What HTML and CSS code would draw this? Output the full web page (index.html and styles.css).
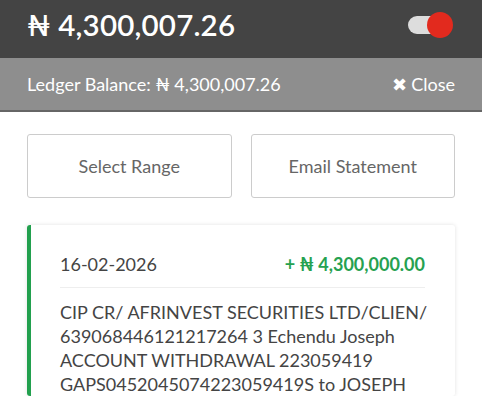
FILE: index.html
```html
<!DOCTYPE html>
<html lang="en">
<head>
  <meta charset="UTF-8" />
  <meta name="viewport" content="width=device-width, initial-scale=1.0" />
  <title>Statement</title>
  <link rel="stylesheet" href="styles.css">
</head>
<body>

  <div class="top">
    <div class="balance">₦ 4,300,007.26</div>
    <div class="toggle"><span class="knob"></span></div>
  </div>

  <div class="ledger">
    <div>Ledger Balance: ₦ 4,300,007.26</div>
    <div class="close">✖ Close</div>
  </div>

  <div class="actions">
    <button class="btn">Select Range</button>
    <button class="btn">Email Statement</button>
  </div>

  <div class="card">
    <div class="card-head">
      <span class="date">16-02-2026</span>
      <span class="credit">+ ₦ 4,300,000.00</span>
    </div>
    <div class="desc">
      CIP CR/ AFRINVEST SECURITIES LTD/CLIEN/<br>
      639068446121217264 3 Echendu Joseph<br>
      ACCOUNT WITHDRAWAL 223059419<br>
      GAPS0452045074223059419S to JOSEPH
    </div>
  </div>

</body>
</html>
```

FILE: styles.css
```css
html, body {
  margin: 0;
  padding: 0;
  background: #fff;
  font-family: Lato, "Open Sans", sans-serif;
  overflow: hidden;
}
.top {
  height: 58px;
  background: #444;
  display: flex;
  align-items: center;
  justify-content: space-between;
  padding: 0 32px 0 27px;
  box-sizing: border-box;
}
.balance {
  color: #fff;
  font-size: 29.5px;
  font-weight: 600;
  letter-spacing: 0.2px;
  margin-top: -10px;
}
.toggle {
  position: relative;
  width: 34px;
  height: 18px;
  background: #ddd;
  border-radius: 9px;
  margin-top: -8px;
  margin-right: 8px;
}
.knob {
  position: absolute;
  right: -11px;
  top: -4px;
  width: 26px;
  height: 26px;
  border-radius: 50%;
  background: #e22a1e;
}
.ledger {
  height: 52px;
  background: #8e8e8e;
  border-bottom: 2px solid #666;
  display: flex;
  align-items: center;
  justify-content: space-between;
  padding: 0 27px;
  color: #fff;
  font-size: 18px;
}
.close {
  font-size: 18px;
}
.actions {
  display: flex;
  gap: 19px;
  padding: 22px 27px 0 27px;
}
.btn {
  flex: 1;
  height: 64px;
  background: #fff;
  border: 1px solid #ccc;
  border-radius: 3px;
  font-family: inherit;
  font-size: 18px;
  color: #666;
}
.card {
  margin: 27px 27px 0 27px;
  border-left: 4px solid #22a04e;
  border-radius: 3px;
  box-shadow: 0 0 4px rgba(0, 0, 0, 0.12);
  padding: 15px 30px 0 29px;
}
.card-head {
  display: flex;
  justify-content: space-between;
  align-items: center;
  height: 47px;
  border-bottom: 1px solid #eee;
  font-size: 18px;
}
.date {
  color: #444;
}
.credit {
  color: #26a150;
  font-weight: 700;
}
.desc {
  padding-top: 12px;
  font-size: 18px;
  line-height: 24px;
  color: #444;
  white-space: nowrap;
}
```
